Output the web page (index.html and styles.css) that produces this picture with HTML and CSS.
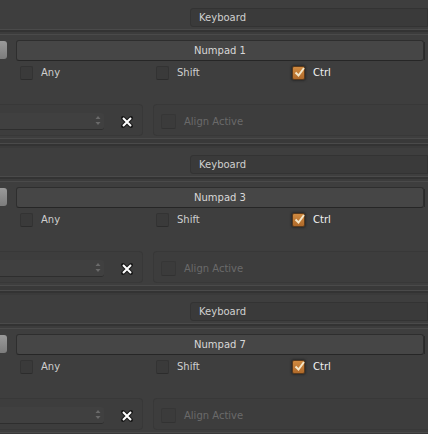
FILE: index.html
```html
<!DOCTYPE html>
<html>
<head>
<meta charset="utf-8">
<link rel="stylesheet" href="styles.css">
</head>
<body>
<div class="page">
  <section class="block">
    <div class="kb-row"><div class="dropdown">Keyboard</div></div>
    <div class="sep"></div>
    <div class="key-row"><div class="stub"></div><div class="keyfield">Numpad 1</div><div class="endline"></div></div>
    <div class="mods">
      <label class="mod"><span class="cb"></span><span>Any</span></label>
      <label class="mod"><span class="cb"></span><span>Shift</span></label>
      <label class="mod"><span class="cb on"><svg viewBox="0 0 13 13" width="13" height="13"><path d="M2.5 6.5 L5.5 9.5 L11 2" fill="none" stroke="#f4e6c8" stroke-width="2"/></svg></span><span class="on-label">Ctrl</span></label>
    </div>
    <div class="panels">
      <div class="panel left"><div class="select"><span class="arrows"><svg viewBox="0 0 6 11" width="6" height="11"><path d="M0.5 4 L3 1 L5.5 4 Z M0.5 7 L3 10 L5.5 7 Z" fill="#6a6a6a"/></svg></span></div><svg class="x" viewBox="0 0 12 12" width="12" height="12"><path d="M2 2 L10 10 M10 2 L2 10" stroke="#1a1a1a" stroke-width="4" stroke-linecap="round"/><path d="M2 2 L10 10 M10 2 L2 10" stroke="#ffffff" stroke-width="2"/></svg></div>
      <div class="panel right"><span class="cb dis"></span><span class="dis-label">Align Active</span></div>
    </div>
    <div class="bottom"></div>
  </section>
  <section class="block">
    <div class="kb-row"><div class="dropdown">Keyboard</div></div>
    <div class="sep"></div>
    <div class="key-row"><div class="stub"></div><div class="keyfield">Numpad 3</div><div class="endline"></div></div>
    <div class="mods">
      <label class="mod"><span class="cb"></span><span>Any</span></label>
      <label class="mod"><span class="cb"></span><span>Shift</span></label>
      <label class="mod"><span class="cb on"><svg viewBox="0 0 13 13" width="13" height="13"><path d="M2.5 6.5 L5.5 9.5 L11 2" fill="none" stroke="#f4e6c8" stroke-width="2"/></svg></span><span class="on-label">Ctrl</span></label>
    </div>
    <div class="panels">
      <div class="panel left"><div class="select"><span class="arrows"><svg viewBox="0 0 6 11" width="6" height="11"><path d="M0.5 4 L3 1 L5.5 4 Z M0.5 7 L3 10 L5.5 7 Z" fill="#6a6a6a"/></svg></span></div><svg class="x" viewBox="0 0 12 12" width="12" height="12"><path d="M2 2 L10 10 M10 2 L2 10" stroke="#1a1a1a" stroke-width="4" stroke-linecap="round"/><path d="M2 2 L10 10 M10 2 L2 10" stroke="#ffffff" stroke-width="2"/></svg></div>
      <div class="panel right"><span class="cb dis"></span><span class="dis-label">Align Active</span></div>
    </div>
    <div class="bottom"></div>
  </section>
  <section class="block">
    <div class="kb-row"><div class="dropdown">Keyboard</div></div>
    <div class="sep"></div>
    <div class="key-row"><div class="stub"></div><div class="keyfield">Numpad 7</div><div class="endline"></div></div>
    <div class="mods">
      <label class="mod"><span class="cb"></span><span>Any</span></label>
      <label class="mod"><span class="cb"></span><span>Shift</span></label>
      <label class="mod"><span class="cb on"><svg viewBox="0 0 13 13" width="13" height="13"><path d="M2.5 6.5 L5.5 9.5 L11 2" fill="none" stroke="#f4e6c8" stroke-width="2"/></svg></span><span class="on-label">Ctrl</span></label>
    </div>
    <div class="panels">
      <div class="panel left"><div class="select"><span class="arrows"><svg viewBox="0 0 6 11" width="6" height="11"><path d="M0.5 4 L3 1 L5.5 4 Z M0.5 7 L3 10 L5.5 7 Z" fill="#6a6a6a"/></svg></span></div><svg class="x" viewBox="0 0 12 12" width="12" height="12"><path d="M2 2 L10 10 M10 2 L2 10" stroke="#1a1a1a" stroke-width="4" stroke-linecap="round"/><path d="M2 2 L10 10 M10 2 L2 10" stroke="#ffffff" stroke-width="2"/></svg></div>
      <div class="panel right"><span class="cb dis"></span><span class="dis-label">Align Active</span></div>
    </div>
    <div class="bottom"></div>
  </section>
</div>
</body>
</html>
```
FILE: styles.css
```css
* { box-sizing: border-box; }
html, body { margin: 0; padding: 0; }
body {
  background: #3e3e3e;
  font-family: "DejaVu Sans", sans-serif;
  font-size: 10px;
  color: #d4d4d4;
  overflow: hidden;
  width: 428px;
  height: 434px;
}
.page { width: 428px; overflow: hidden; }
.block {
  height: 147px;
  flex: none;
  display: flex;
  flex-direction: column;
}
.kb-row {
  margin-top: 8px;
  height: 19px;
  flex: none;
  padding-left: 190px;
  display: flex;
}
.dropdown {
  width: 260px;
  height: 19px;
  background: #3a3a3a;
  border: 1px solid #333;
  border-radius: 3px 0 0 3px;
  padding-left: 8px;
  line-height: 17px;
  color: #d0d0d0;
}
.sep {
  margin-top: 2px;
  height: 6px;
  flex: none;
  border-top: 1px solid #4a4a4a;
  border-bottom: 1px solid #4a4a4a;
  background: linear-gradient(#333 0 2px, #3c3c3c 2px);
}
.key-row {
  margin-top: 5px;
  height: 21px;
  flex: none;
  display: flex;
  align-items: flex-start;
}
.stub {
  width: 7px;
  height: 18px;
  margin-top: 1px;
  background: linear-gradient(#9a9a9a, #7c7c7c);
  border-radius: 0 3px 3px 0;
}
.keyfield {
  margin-left: 9px;
  width: 408px;
  height: 21px;
  background: #464646;
  border: 1px solid #2e2e2e;
  border-bottom-color: #262626;
  border-radius: 3px;
  text-align: center;
  line-height: 19px;
  color: #d8d8d8;
}
.endline {
  width: 1px;
  height: 18px;
  margin-top: 2px;
  background: #2a2a2a;
}
.mods {
  margin-top: 4px;
  height: 15px;
  flex: none;
  display: flex;
  padding-left: 20px;
}
.mod {
  width: 137px;
  display: flex;
  align-items: center;
  gap: 8px;
  color: #cfcfcf;
}
.cb {
  width: 13px;
  height: 14px;
  background: #3a3a3a;
  border: 1px solid #333;
  border-bottom-color: #2c2c2c;
  border-radius: 2px;
  display: inline-block;
  flex: none;
}
.cb.on {
  background: linear-gradient(#d08a40, #b06a2a);
  border-color: #5a3a1c;
  box-shadow: 0 0 2px 1px #2a2a2a;
  position: relative;
}
.cb.on svg { position: absolute; left: 0; top: -1px; }
.on-label { color: #f2f2f2; }
.panels {
  margin-top: 24px;
  height: 32px;
  flex: none;
  display: flex;
  gap: 10px;
}
.panel {
  height: 32px;
  border: 1px solid #383838;
  border-radius: 4px;
  background: #3d3d3d;
  display: flex;
  align-items: center;
}
.panel.left {
  width: 149px;
  margin-left: -6px;
  padding-left: 6px;
  border-left: none;
  border-radius: 0 4px 4px 0;
}
.select {
  width: 104px;
  height: 17px;
  margin-top: 2px;
  background: #404040;
  border-bottom: 1px solid #2e2e2e;
  border-radius: 0 3px 3px 0;
  display: flex;
  justify-content: flex-end;
  align-items: center;
  padding-right: 3px;
}
.arrows { display: flex; }
.x {
  margin-left: 17px;
  margin-top: 4px;
  flex: none;
}
.panel.right {
  flex: 1;
  padding-left: 7px;
  gap: 8px;
  border-right: none;
  border-radius: 4px 0 0 4px;
}
.cb.dis {
  width: 15px;
  height: 15px;
  opacity: 0.6;
  margin-top: 2px;
}
.dis-label {
  color: #6a6a6a;
  margin-top: 2px;
}
.bottom {
  margin-top: 2px;
  height: 10px;
  flex: none;
  border-top: 1px solid #4a4a4a;
  background: linear-gradient(#393939 0 4px, #4a4a4a 4px 5px, #333 5px 7px, #3a3a3a 7px);
}
```
